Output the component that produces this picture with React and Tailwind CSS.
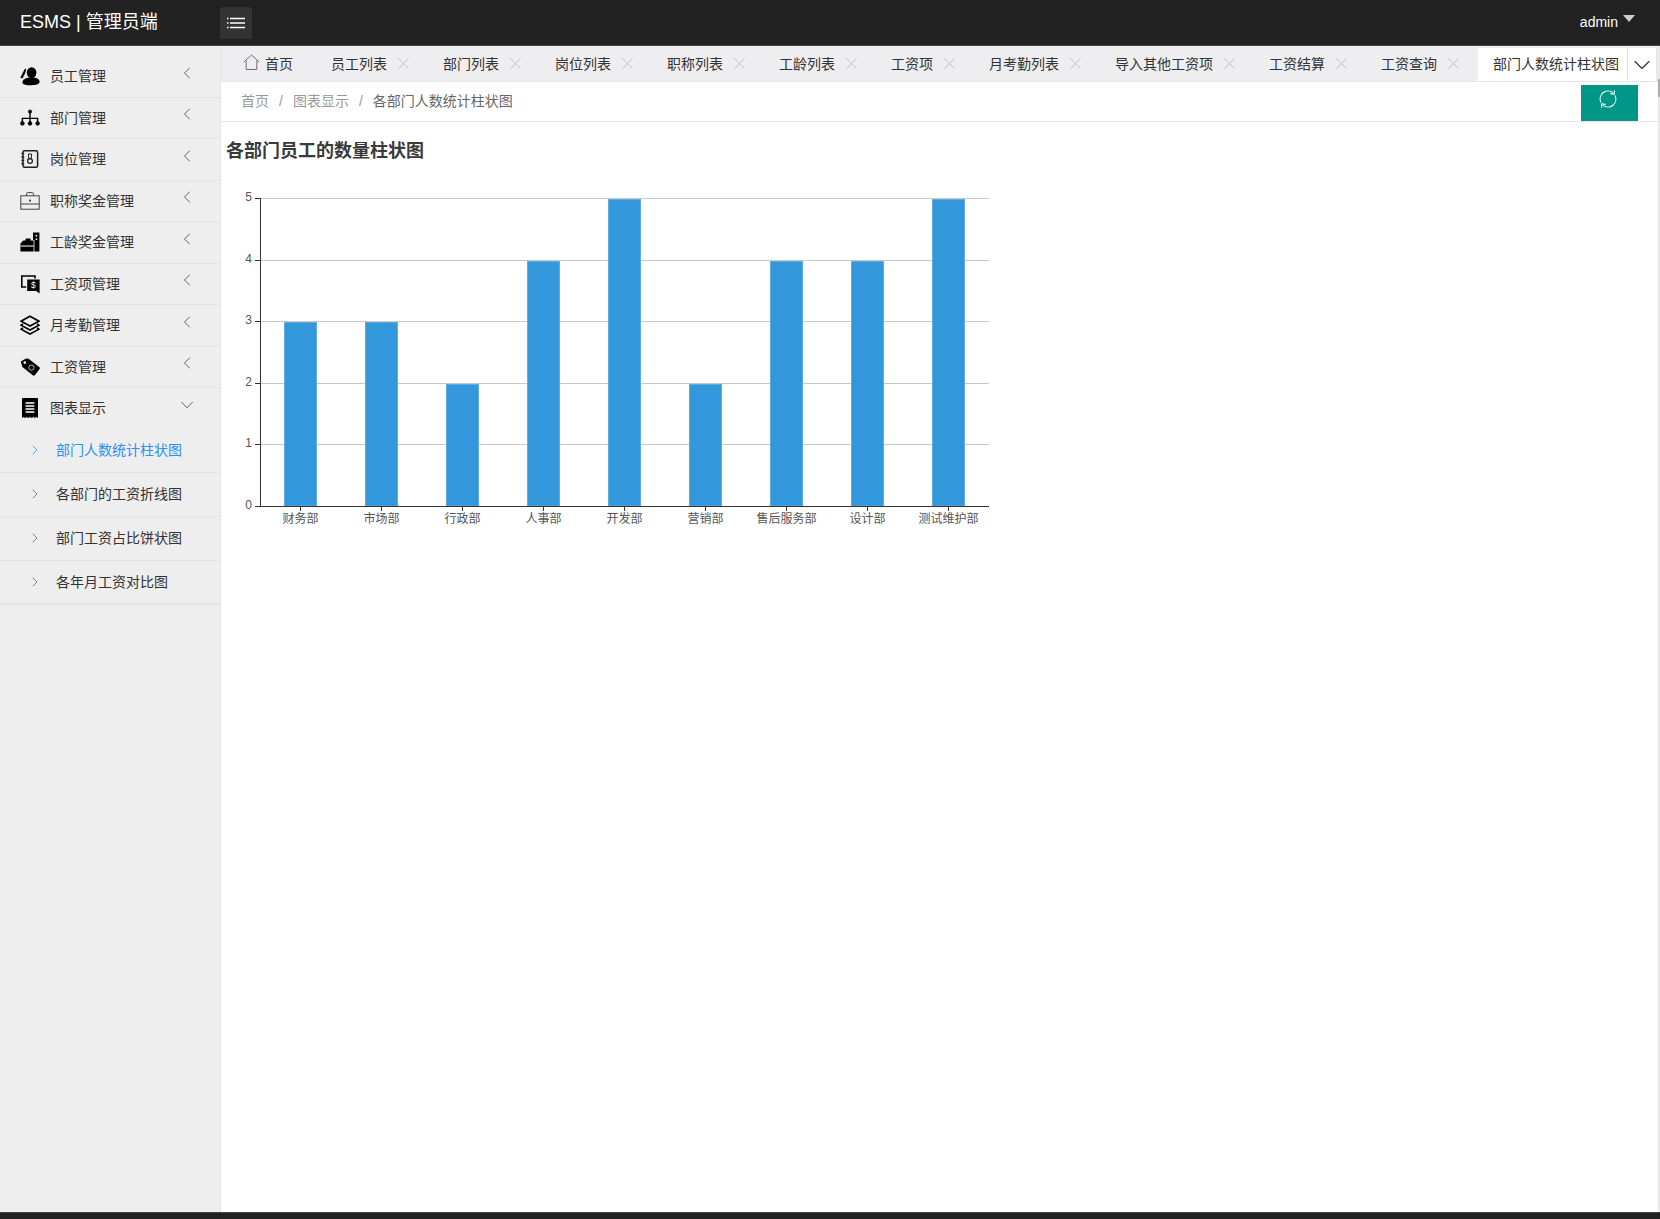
import React from 'react'
import { ChevronLeft, ChevronDown, ChevronRight, X } from 'lucide-react'

const fontStack = "font-['Liberation_Sans','Noto_Sans_CJK_SC',sans-serif]"

/* sidebar icons */
const UsersIcon = () => (
  <svg viewBox="0 0 20 20" className="w-5 h-5 fill-black">
    <ellipse cx="11.6" cy="6.6" rx="4.8" ry="5.4" />
    <path d="M2.4 16.4c0-3 3.4-5 9.2-5s8 2 8 4.4c0 2.2-3.4 3.4-8 3.4-5.2 0-9.2-.8-9.2-2.8z" />
    <path d="M.4 11.4 5 2.4l1.2 1.2-1.4 4.4-2.4 4.6z" />
  </svg>
)
const SitemapIcon = () => (
  <svg viewBox="0 0 20 20" className="w-5 h-5 fill-black stroke-black">
    <circle cx="10" cy="3.6" r="1.7" strokeWidth="0.6" />
    <circle cx="2.4" cy="15.4" r="1.9" strokeWidth="0.6" />
    <circle cx="10" cy="15.4" r="1.9" strokeWidth="0.6" />
    <circle cx="17.6" cy="15.4" r="1.9" strokeWidth="0.6" />
    <path d="M10 4v10M2.4 14v-3.6h15.2V14" fill="none" strokeWidth="1.4" />
  </svg>
)
const BookIcon = () => (
  <svg viewBox="0 0 20 20" className="w-5 h-5">
    <rect x="3" y="1.8" width="14.6" height="16.4" rx="1.5" className="fill-none stroke-[#222]" strokeWidth="1.5" />
    <path d="M1.4 4.6h2.8M1.4 8h2.8M1.4 11.4h2.8M1.4 14.8h2.8" className="stroke-[#222]" strokeWidth="1.5" />
    <circle cx="10" cy="12" r="2.4" className="fill-none stroke-[#222]" strokeWidth="1.3" />
    <path d="M8.4 5h3.2l-.4 4.8H8.8z" className="fill-none stroke-[#222]" strokeWidth="1" />
  </svg>
)
const BriefcaseIcon = () => (
  <svg viewBox="0 0 20 20" className="w-5 h-5 fill-none stroke-[#444]">
    <rect x="0.8" y="4.8" width="18.4" height="13.4" strokeWidth="1" />
    <path d="M.8 13h18.4M6.6 4.6V2.6a1 1 0 0 1 1-1h4.8a1 1 0 0 1 1 1v2" strokeWidth="1" />
    <circle cx="10" cy="9.6" r="1.1" className="fill-[#444]" strokeWidth="0" />
  </svg>
)
const CaseBuildingIcon = () => (
  <svg viewBox="0 0 20 20" className="w-5 h-5 fill-black">
    <path d="M13 .6h6.4v18.8h-5V8H13z" />
    <path d="M.4 11.4 3.4 8.6h2.2V6.6h5v2h3V19.4H.4z" />
    <path d="M.4 14h13.4" className="stroke-white" strokeWidth="1" />
    <path d="M15.6 3h1.6v1.6h-1.6zM15.6 6.4h1.6V8h-1.6z" className="fill-white" />
  </svg>
)
const MoneyChatIcon = () => (
  <svg viewBox="0 0 20 20" className="w-5 h-5">
    <path d="M1 1.2h14.8v3.4h-1.6V2.8H2.6v9.4h3.6v1.6H1z" className="fill-black" />
    <path d="M7.2 5.6h12.4v14l-3.4-2.6H7.2z" className="fill-black" />
    <text x="13.4" y="14.4" fontSize="8.5" textAnchor="middle" className="fill-white" fontFamily="Liberation Sans">$</text>
  </svg>
)
const LayersIcon = () => (
  <svg viewBox="0 0 20 20" className="w-5 h-5 fill-none stroke-black" strokeWidth="1.6">
    <path d="M10 1.2 19 6.2 10 11 1 6.2z" />
    <path d="M3 8.8 1 10.2 10 15l9-4.8-2-1.4" />
    <path d="M3 12.8 1 14.2 10 19l9-4.8-2-1.4" />
  </svg>
)
const TagIcon = () => (
  <svg viewBox="0 0 20 20" className="w-5 h-5">
    <path d="M.8 4.4 6 1.4l2.6.4L19.2 10a1.6 1.6 0 0 1 .2 2.2L15 18a1.6 1.6 0 0 1-2.2.2L2.4 10z" className="fill-black" />
    <circle cx="4.8" cy="5.6" r="1.3" className="fill-white" />
    <circle cx="11.4" cy="10.6" r="2.6" className="fill-none stroke-[#bbb]" strokeWidth="1" />
  </svg>
)
const ReceiptIcon = () => (
  <svg viewBox="0 0 20 20" className="w-5 h-5">
    <path d="M2 1a1 1 0 0 1 1-1h14a1 1 0 0 1 1 1v19l-1.8-1-1.6 1-1.6-1-1.6 1-1.4-1-1.6 1-1.6-1-1.6 1-1.6-1L2 20z" className="fill-black" />
    <path d="M5.6 5h8.8M5.6 8h8.8M5.6 11h8.8M5.6 14h8.8" className="stroke-white" strokeWidth="1.3" />
  </svg>
)

const menu = [
  ['员工管理', UsersIcon],
  ['部门管理', SitemapIcon],
  ['岗位管理', BookIcon],
  ['职称奖金管理', BriefcaseIcon],
  ['工龄奖金管理', CaseBuildingIcon],
  ['工资项管理', MoneyChatIcon],
  ['月考勤管理', LayersIcon],
  ['工资管理', TagIcon],
]

const subMenu = ['部门人数统计柱状图', '各部门的工资折线图', '部门工资占比饼状图', '各年月工资对比图']

const tabs = ['员工列表', '部门列表', '岗位列表', '职称列表', '工龄列表', '工资项', '月考勤列表', '导入其他工资项', '工资结算', '工资查询']

const chartData = [
  ['财务部', 3],
  ['市场部', 3],
  ['行政部', 2],
  ['人事部', 4],
  ['开发部', 5],
  ['营销部', 2],
  ['售后服务部', 4],
  ['设计部', 4],
  ['测试维护部', 5],
]

const Sidebar = () => (
  <aside className="w-[221px] shrink-0 bg-[#eeeeee] border-r border-[#e4e4e4] pt-[10px] text-sm text-[#333]">
    {menu.map(([label, Icon]) => (
      <div key={label} className="h-[41.5px] border-b border-[#e4e4e4] flex items-center pl-[20px] pr-[23px]">
        <span className="w-[20px] h-[20px] mr-[10px]"><Icon /></span>
        <span className="flex-1 leading-none">{label}</span>
        <ChevronLeft className="w-[20px] h-[20px] text-[#555] -mt-[7px]" strokeWidth={1.1} />
      </div>
    ))}
    <div className="h-[40.5px] flex items-center pl-[20px] pr-[22px]">
      <span className="w-[20px] h-[20px] mr-[10px]"><ReceiptIcon /></span>
      <span className="flex-1 leading-none">图表显示</span>
      <ChevronDown className="w-[22px] h-[22px] text-[#555] -mt-[7px]" strokeWidth={1} />
    </div>
    {subMenu.map((label, i) => (
      <div
        key={label}
        className={`h-[44px] flex items-center pl-[27px] border-b border-[#e4e4e4] last:border-b-2 ${i === 0 ? 'text-[#2a8ff7]' : 'text-[#333]'}`}
      >
        <ChevronRight className={`w-[16px] h-[16px] mr-[13px] ${i === 0 ? 'text-[#2a8ff7]' : 'text-[#666]'}`} strokeWidth={1.2} />
        <span>{label}</span>
      </div>
    ))}
  </aside>
)

const TabBar = () => (
  <div className="h-[36px] bg-[#eeeef0] border-b border-[#e6e6e6] flex items-center text-sm text-[#333]">
    <div className="h-full flex items-center pl-[22px] pr-[18px]">
      <svg viewBox="0 0 18 18" className="w-[17px] h-[17px] mr-[5px] -mt-[3px] fill-none stroke-[#666]" strokeWidth="1">
        <path d="M.8 8.6 9 1l8.2 7.6M3.4 7v9.4h11.2V7" />
      </svg>
      首页
    </div>
    {tabs.map((t) => (
      <div key={t} className="h-full flex items-center pl-[20px] whitespace-nowrap">
        {t}
        <span className="w-[36px] flex justify-center pr-[3px]"><X className="w-[19px] h-[19px] text-[#bbb]" strokeWidth={1.1} /></span>
      </div>
    ))}
    <div className="ml-[5px] self-end h-[33px] w-[149px] bg-white flex items-center pl-[15px] pb-[1px] whitespace-nowrap shrink-0">部门人数统计柱状图</div>
    <div className="self-end h-[33px] w-[30px] shrink-0 bg-white border-l border-r border-[#e6e6e6] flex items-center justify-center">
      <ChevronDown className="w-[28px] h-[28px] shrink-0 text-[#333]" strokeWidth={1} />
    </div>
  </div>
)

const Breadcrumb = () => (
  <div className="h-[40px] bg-white border-b border-[#e7e7e7] flex items-stretch justify-between pl-[20px] pr-[20px] text-sm">
    <div className="flex items-center text-[#999] pb-[2px]">
      <span>首页</span>
      <span className="px-[10px]">/</span>
      <span>图表显示</span>
      <span className="px-[10px]">/</span>
      <span className="text-[#666]">各部门人数统计柱状图</span>
    </div>
    <button className="w-[57px] mt-[3px] bg-[#009688] flex justify-center pt-[4px] pr-[4px]">
      <svg viewBox="0 0 20 20" className="w-[20px] h-[20px] fill-none stroke-white" strokeWidth="1.1">
        <path d="M3 13.6A8 8 0 0 1 15 3.6" />
        <path d="M17 6.4A8 8 0 0 1 5 16.4" />
        <path d="M16.4 1.4 16.2 5.2 12.4 4.6" />
        <path d="M3.6 18.6 3.8 14.8 7.6 15.4" />
      </svg>
    </button>
  </div>
)

const BarChart = () => {
  const yFor = (v) => Math.round(308 - v * 61.6)
  return (
    <svg viewBox="0 0 780 340" className="w-[780px] h-[340px] block overflow-visible" fontFamily="Liberation Sans, Noto Sans CJK SC, sans-serif">
      {[1, 2, 3, 4, 5].map((v) => (
        <line key={v} x1="30" x2="759" y1={yFor(v) + 0.5} y2={yFor(v) + 0.5} stroke="#c8c8c8" />
      ))}
      {chartData.map(([name, v], i) => {
        const cx = 70.5 + i * 81
        return (
          <g key={name}>
            <rect x={cx - 16} y={yFor(v) + 1.5} width="32" height={308 - yFor(v) - 1.5} fill="#3398db" stroke="#5dade2" />
            <line x1={cx} x2={cx} y1="308" y2="313" stroke="#333" />
            <text x={cx} y="325" fontSize="12" textAnchor="middle" fill="#555">{name}</text>
          </g>
        )
      })}
      {[0, 1, 2, 3, 4, 5].map((v) => (
        <g key={v}>
          <line x1="25" x2="30" y1={yFor(v) + 0.5} y2={yFor(v) + 0.5} stroke="#333" />
          <text x="22" y={yFor(v) + 3} fontSize="12" textAnchor="end" fill="#555">{v}</text>
        </g>
      ))}
      <line x1="30.5" x2="30.5" y1="0" y2="308" stroke="#333" />
      <line x1="25" x2="759" y1="308.5" y2="308.5" stroke="#333" />
    </svg>
  )
}

export default function App() {
  return (
    <div className={`h-[1219px] flex flex-col bg-white overflow-hidden ${fontStack}`}>
      <header className="h-[46px] shrink-0 bg-[#222222] border-b border-[#444] flex items-center justify-between pr-[25px]">
        <div className="flex items-center">
          <div className="w-[220px] pl-[20px] text-[18px] text-white whitespace-nowrap">ESMS | 管理员端</div>
          <button className="w-[32px] h-[32px] rounded-[3px] bg-[#333333] flex items-center justify-center">
            <svg viewBox="0 0 18 12" className="w-[18px] h-[12px] stroke-white" strokeWidth="1.3">
              <path d="M0 1.5h1.5M3 1.5h15M0 6h1.5M3 6h15M0 10.5h1.5M3 10.5h15" />
            </svg>
          </button>
        </div>
        <div className="flex items-center text-sm text-white pb-[2px]">
          admin
          <span className="ml-[5px] -mt-[6px] w-0 h-0 border-x-[6px] border-x-transparent border-t-[7px] border-t-[#ccc]" />
        </div>
      </header>
      <div className="flex-1 flex min-h-0">
        <Sidebar />
        <main className="flex-1 min-w-0">
          <TabBar />
          <Breadcrumb />
          <h3 className="mt-[19px] ml-[5px] text-[18px] leading-[20px] font-bold text-[#3a3a3a]">各部门员工的数量柱状图</h3>
          <div className="mt-[37px] ml-[9px]">
            <BarChart />
          </div>
        </main>
        {/* thin page scrollbar on the right edge */}
        <div className="w-[2px] shrink-0 bg-[#e8e8e8] pt-[33px]">
          <div className="h-[18px] bg-[#aaaaaa]" />
        </div>
      </div>
      <footer className="h-[7px] shrink-0 bg-[#222222] border-t border-[#444]" />
    </div>
  )
}
